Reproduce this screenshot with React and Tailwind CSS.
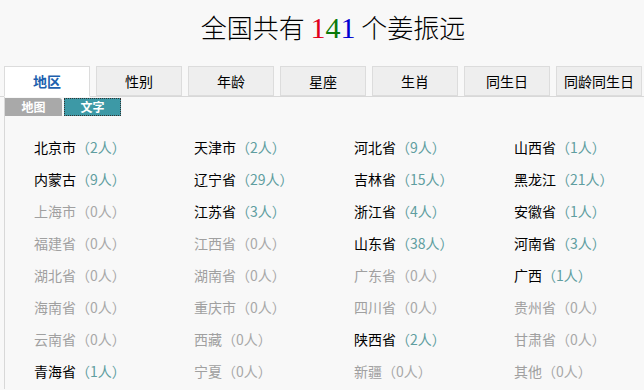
import React from 'react';

const tabs = ['地区', '性别', '年龄', '星座', '生肖', '同生日', '同龄同生日'];

const regions = [
  ['北京市', 2], ['天津市', 2], ['河北省', 9], ['山西省', 1],
  ['内蒙古', 9], ['辽宁省', 29], ['吉林省', 15], ['黑龙江', 21],
  ['上海市', 0], ['江苏省', 3], ['浙江省', 4], ['安徽省', 1],
  ['福建省', 0], ['江西省', 0], ['山东省', 38], ['河南省', 3],
  ['湖北省', 0], ['湖南省', 0], ['广东省', 0], ['广西', 1],
  ['海南省', 0], ['重庆市', 0], ['四川省', 0], ['贵州省', 0],
  ['云南省', 0], ['西藏', 0], ['陕西省', 2], ['甘肃省', 0],
  ['青海省', 1], ['宁夏', 0], ['新疆', 0], ['其他', 0],
];

const App = () => {
  return (
    <div className="min-h-[390px] w-[644px] bg-[#f8f8f8] font-['Noto_Sans_CJK_SC',sans-serif] text-black overflow-hidden">
      <h1 className="h-[66px] pt-[10px] pl-[22px] text-center text-[26px] font-light leading-[34px]">
        全国共有{' '}
        <span className="font-['Liberation_Serif',serif] text-[30px]">
          <span className="text-[#e0001b]">1</span>
          <span className="text-[#0a7a0a]">4</span>
          <span className="text-[#0000d0]">1</span>
        </span>{' '}
        个姜振远
      </h1>

      <div className="flex gap-[6px] pl-[4px] border-b border-[#d8d8d8] h-[31px]">
        {tabs.map((t, i) => (
          <div
            key={t}
            className={
              i === 0
                ? 'w-[86px] h-[31px] bg-white border border-[#dcdcdc] border-b-white flex items-center justify-center text-[14px] font-bold text-[#1d5fae]'
                : 'w-[86px] h-[30px] bg-[#eeeeee] border border-[#dcdcdc] flex items-center justify-center text-[14px]'
            }
          >
            {t}
          </div>
        ))}
      </div>

      <div className="ml-[4px] border-l border-[#d8d8d8] pb-[2px]">
        <div className="flex gap-[2px] pt-[1px]">
          <div className="w-[57px] h-[18px] bg-[#a9a9a9] rounded-tr-[3px] text-white text-[12px] font-bold flex items-center justify-center">地图</div>
          <div className="w-[57px] h-[18px] bg-[#3d99a6] outline-1 outline-dotted outline-[#333] -outline-offset-1 text-white text-[12px] font-bold flex items-center justify-center">文字</div>
        </div>

        <div className="grid grid-cols-[160px_160px_160px_160px] pl-[29px] mt-[15px]">
          {regions.map(([name, n]) => (
            <div key={name} className="h-[32px] flex items-center text-[14px] whitespace-nowrap">
              <span className={n > 0 ? 'text-black' : 'text-[#a0a0a0]'}>{name}</span>
              <span className={n > 0 ? 'text-[#5f9ea0]' : 'text-[#a8a8a8]'}>（{n}人）</span>
            </div>
          ))}
        </div>
      </div>
    </div>
  );
};

export default App;
